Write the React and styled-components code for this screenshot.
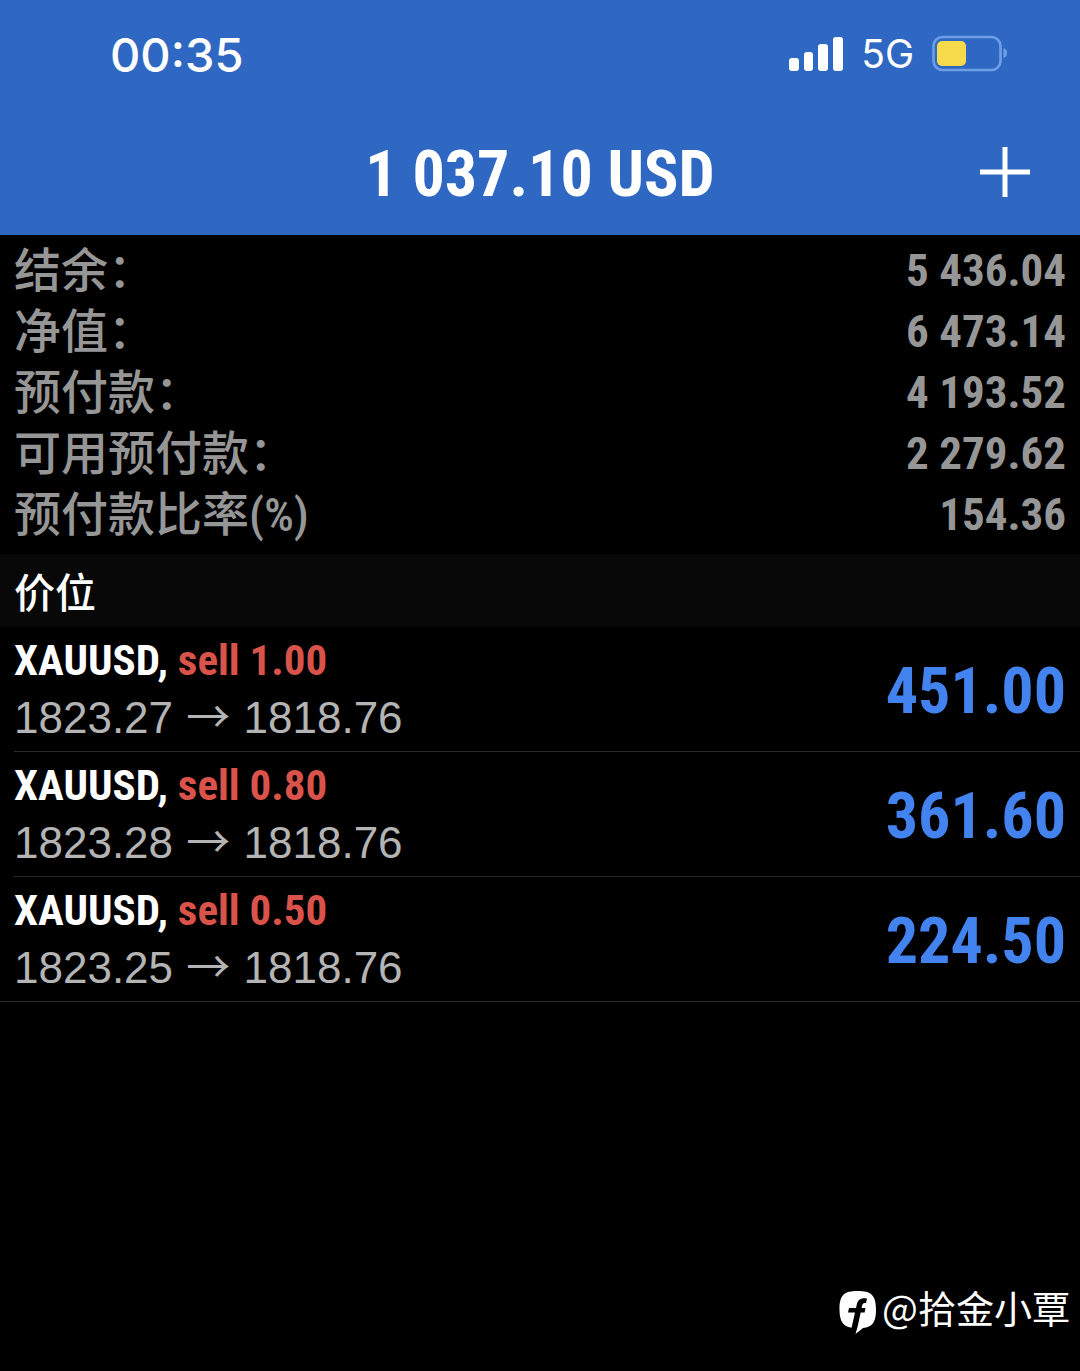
import React from 'react';
import styled, { createGlobalStyle } from 'styled-components';

const GlobalStyle = createGlobalStyle`
  * {
    box-sizing: border-box;
  }

  body {
    margin: 0;
    background: #000;
  }
`;

const condensed = '"Roboto Condensed", "Noto Sans CJK SC", sans-serif';
const chinese = '"Noto Sans CJK SC", sans-serif';

const Page = styled.div`
  min-height: 100vh;
  display: flex;
  flex-direction: column;
  background: #000;
  color: #fff;
  font-family: ${condensed};
`;

const Header = styled.header`
  background: #2f68c3;
`;

const StatusBar = styled.div`
  height: 108px;
  padding: 0 73px 0 110px;
  display: flex;
  align-items: center;
  justify-content: space-between;
  font-family: Inter, sans-serif;
`;

const Clock = styled.time`
  font-size: 47px;
  font-weight: 500;
`;

const StatusIcons = styled.div`
  display: flex;
  align-items: center;
  gap: 18px;
`;

const Network = styled.span`
  font-size: 39px;
  line-height: 42px;
`;

const TitleBar = styled.div`
  display: grid;
  grid-template-columns: 1fr auto 1fr;
  align-items: center;
  height: 127px;
  padding: 0 49px;
`;

const Title = styled.h1`
  grid-column: 2;
  margin: 0;
  padding-top: 6px;
  font-size: 64px;
  line-height: 72px;
  font-weight: 700;
`;

const AddButton = styled.button`
  justify-self: end;
  display: flex;
  padding: 0;
  border: 0;
  background: none;
  color: inherit;
  cursor: pointer;
`;

const Summary = styled.dl`
  margin: 0;
  padding: 5px 14px 9px;
  color: #969696;
`;

const SummaryRow = styled.div`
  display: flex;
  justify-content: space-between;
  line-height: 61px;
`;

const SummaryLabel = styled.dt`
  font-size: 47px;
  font-weight: 500;
`;

const SummaryValue = styled.dd`
  margin: 0;
  font-size: 45px;
  font-weight: 700;
`;

const SectionTitle = styled.h2`
  margin: 0;
  padding: 0 14px;
  background: #080808;
  font-family: ${chinese};
  font-size: 41px;
  line-height: 73px;
  font-weight: 500;
`;

const Positions = styled.ul`
  margin: 0;
  padding: 0;
  list-style: none;
`;

const Position = styled.li`
  display: flex;
  align-items: center;
  justify-content: space-between;
  height: 125px;
  margin-left: 14px;
  padding-right: 14px;
  border-bottom: 1px solid #2b2b2b;

  &:last-child {
    margin-left: 0;
    padding-left: 14px;
  }
`;

const Order = styled.div`
  font-size: 43px;
  line-height: 58px;
  font-weight: 700;
`;

const Side = styled.span`
  color: #d9534a;
`;

const Prices = styled.div`
  font-family: "Liberation Sans", ${chinese};
  font-size: 44px;
  line-height: 58px;
  color: #b4b4b4;
`;

const Arrow = styled.span`
  margin: 0 1px;
  font-family: ${chinese};
  line-height: 1;
`;

const Profit = styled.div`
  padding-top: 6px;
  font-size: 64px;
  line-height: 72px;
  font-weight: 700;
  color: #4283f0;
`;

const Credit = styled.footer`
  display: flex;
  align-items: flex-end;
  justify-content: flex-end;
  gap: 5px;
  margin-top: auto;
  padding: 0 10px 36px;
  font-family: ${chinese};
  font-size: 38px;
  line-height: 56px;
`;

const summary = [
  { label: '结余：', value: '5 436.04' },
  { label: '净值：', value: '6 473.14' },
  { label: '预付款：', value: '4 193.52' },
  { label: '可用预付款：', value: '2 279.62' },
  { label: '预付款比率(%)', value: '154.36' },
];

const positions = [
  { symbol: 'XAUUSD', side: 'sell 1.00', open: '1823.27', current: '1818.76', profit: '451.00' },
  { symbol: 'XAUUSD', side: 'sell 0.80', open: '1823.28', current: '1818.76', profit: '361.60' },
  { symbol: 'XAUUSD', side: 'sell 0.50', open: '1823.25', current: '1818.76', profit: '224.50' },
];

const SignalIcon = () => (
  <svg width="54" height="36" viewBox="0 0 54 36" fill="#fff" aria-hidden="true">
    <rect x="0" y="22" width="10" height="13" rx="3" />
    <rect x="15" y="16" width="9" height="19" rx="3" />
    <rect x="29" y="8" width="10" height="27" rx="3" />
    <rect x="44" y="1" width="10" height="34" rx="3" />
  </svg>
);

const BatteryIcon = () => (
  <svg width="75" height="38" viewBox="0 0 75 38" aria-hidden="true">
    <rect x="1.5" y="2" width="67" height="33" rx="9" fill="none" stroke="#6d9fe8" strokeWidth="2.6" />
    <rect x="5" y="6" width="29" height="25" rx="5" fill="#f7da4b" />
    <path d="M71.500 13c3 1 3.500 3 3.500 5s-.5 4-3.500 5z" fill="#6d9fe8" />
  </svg>
);

const PlusIcon = () => (
  <svg width="52" height="52" viewBox="0 0 52 52" stroke="#fff" strokeWidth="5" aria-hidden="true">
    <path d="M26 1v50M1 26h50" />
  </svg>
);

const CreditIcon = () => (
  <svg width="38" height="44" viewBox="0 0 38 44" aria-hidden="true">
    <path
      d="M18.500 0C32 0 37 4 37 18.500C37 32 33 36 24 37L16.500 43L17 37C5 37 .5 32 .5 18.500C.5 4 5 0 18.500 0Z"
      fill="#fff"
    />
    <path d="M28 7.500L27 12C24.500 11.500 23.500 12.500 23 15L22.600 17H26.500L25.600 21.500H21.700L18.500 36L16.500 43L15 37H12.500L16 21.500H9L10 17H17L17.800 13.500C19 8.500 22 6.500 28 7.500Z" fill="#000" />
  </svg>
);

const App = () => {
  return (
    <>
      <GlobalStyle />
      <Page>
        <Header>
          <StatusBar>
            <Clock>00:35</Clock>
            <StatusIcons>
              <SignalIcon />
              <Network>5G</Network>
              <BatteryIcon />
            </StatusIcons>
          </StatusBar>
          <TitleBar>
            <Title>1 037.10 USD</Title>
            <AddButton type="button" aria-label="Add">
              <PlusIcon />
            </AddButton>
          </TitleBar>
        </Header>

        <main>
          <Summary>
            {summary.map((item) => (
              <SummaryRow key={item.label}>
                <SummaryLabel>{item.label}</SummaryLabel>
                <SummaryValue>{item.value}</SummaryValue>
              </SummaryRow>
            ))}
          </Summary>

          <SectionTitle>价位</SectionTitle>
          <Positions>
            {positions.map((item) => (
              <Position key={item.open}>
                <div>
                  <Order>
                    {item.symbol}, <Side>{item.side}</Side>
                  </Order>
                  <Prices>
                    {item.open} <Arrow>→</Arrow> {item.current}
                  </Prices>
                </div>
                <Profit>{item.profit}</Profit>
              </Position>
            ))}
          </Positions>
        </main>

        <Credit>
          <CreditIcon />
          <span>@拾金小覃</span>
        </Credit>
      </Page>
    </>
  );
};

export default App;
